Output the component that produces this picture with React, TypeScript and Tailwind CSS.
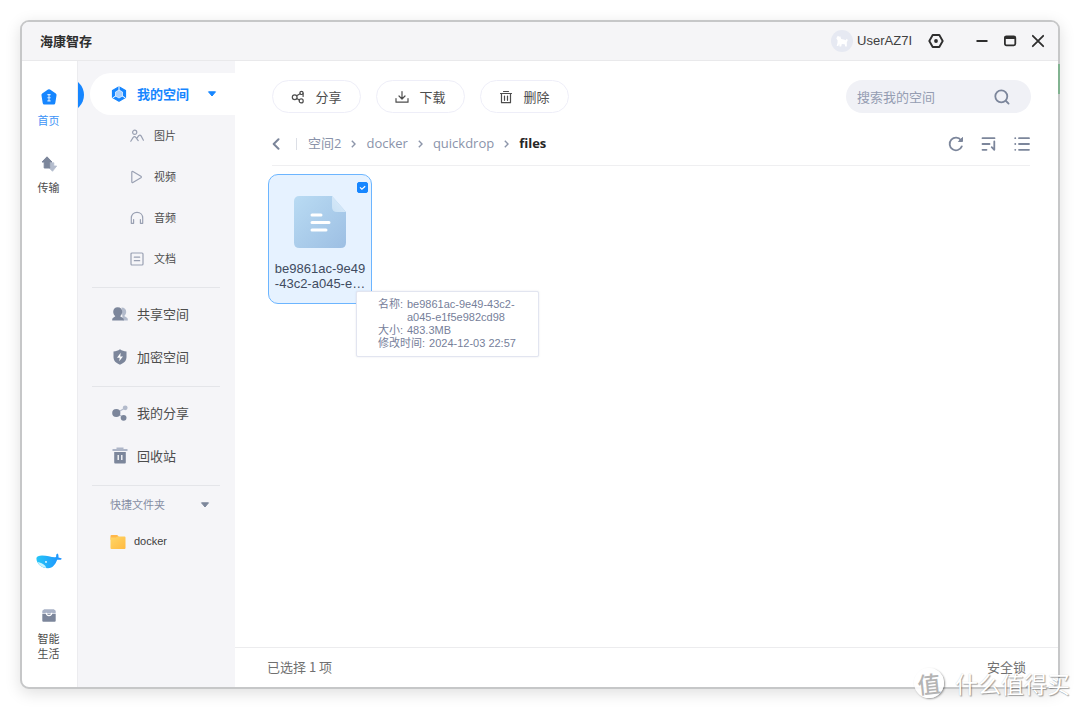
import React, { useState } from "react";

const ARIAL = "font-['Liberation_Sans','Noto_Sans_CJK_SC',sans-serif]";

function HomeIcon() {
  return (
    <svg width="16" height="16" viewBox="0 0 16 16" aria-hidden="true">
      <path d="M7 .6q1-.6 2 0l5.800 4q.9.7.7 1.800l-1.200 7.600q-.2 1.500-1.600 1.500h-9.400q-1.400 0-1.600-1.500L.5 6.400Q.3 5.300 1.200 4.600z" fill="#1686ff" />
      <path d="M8 5.500v6.500M6.400 5.600h3.200M6.400 8.700h3.200M6.400 11.900h3.200" stroke="#d6e9ff" strokeWidth="1.100" />
    </svg>
  );
}

function TransferIcon() {
  return (
    <svg width="16" height="16" viewBox="0 0 16 16" aria-hidden="true">
      <path d="M9.600 6.800h3.200v3.200h2.900l-4.200 5.300L7.800 11.600h1.800z" fill="#b4bccd" stroke="#b4bccd" strokeWidth=".8" strokeLinejoin="round" />
      <path d="M6 .8 11 6H8.800v6H3.200V6H1z" fill="#7c869b" stroke="#7c869b" strokeWidth="1" strokeLinejoin="round" />
    </svg>
  );
}

function WhaleIcon() {
  return (
    <svg width="26" height="16" viewBox="0 0 26 16" aria-hidden="true">
      <defs>
        <linearGradient id="whale" x1="0" x2="1">
          <stop offset="0" stopColor="#25c6f7" />
          <stop offset="1" stopColor="#1e90ff" />
        </linearGradient>
      </defs>
      <path d="M.4 5.200C.6 3.300 3 2.500 6 2.500c5 0 9 1.700 12.800 1.700 1-.1 1.500-.5 1.400-1.300C20 2 20.300.8 21.600.4c.9.800 1 2.600.9 4 1.200.2 2.500.6 3.300 1.300-.6 1.200-2.400 1.300-4.600 1C19.500 11 17 15.200 12 15.200 5.500 15.200.4 10.500.4 5.200z" fill="url(#whale)" />
      <path d="M1.500 9c3 .7 5.500 1.400 7.400 3.500.6.700 1.200 1.700 1.300 2.400C6 14.500 2.900 12.300 1.500 9z" fill="#c9f3ff" />
      <circle cx="10" cy="8.900" r=".9" fill="#fff" />
    </svg>
  );
}

function ChestIcon() {
  return (
    <svg width="14" height="13" viewBox="0 0 14 13" aria-hidden="true">
      <path d="M2.200.3h9.600l1.900 1.500v2.700H.3V1.800z" fill="#a9b2c6" />
      <path d="M.3 5h13.400v6.700q0 1-1 1H1.300q-1 0-1-1z" fill="#7c869b" />
      <path d="M4.200 3.800c.2 3.700 5.400 3.700 5.600 0" fill="none" stroke="#fff" strokeWidth="1.200" />
    </svg>
  );
}

function SpaceIcon() {
  return (
    <svg width="16" height="16" viewBox="0 0 16 16" aria-hidden="true">
      <path d="M8 .8 14.500 4.400v7.200L8 15.200 1.500 11.600V4.400z" fill="#1686ff" stroke="#1686ff" strokeWidth="1.200" strokeLinejoin="round" />
      <path d="M8 0v5M1.500 12l4-2.500M14.500 12l-4-2.500" stroke="#fff" strokeWidth="1" />
      <path d="M8 4 11.500 6v4L8 12 4.500 10V6z" fill="#a8d0ff" stroke="#e4f1ff" strokeWidth=".8" />
    </svg>
  );
}

const line = { fill: "none", stroke: "#9aa1b3", strokeWidth: 1.2, strokeLinecap: "round", strokeLinejoin: "round" } as const;

function PictureIcon() {
  return (
    <svg width="14" height="14" viewBox="0 0 14 14" aria-hidden="true" {...line}>
      <circle cx="4.700" cy="3.300" r="2.100" />
      <path d="M.8 12.300 3.200 8.400q1.300-1.400 2.600 0l2.400 3.200M6.800 9.400l1.900-2.700q1.300-1.200 2.400.2l2.300 4.300" />
    </svg>
  );
}

function VideoIcon() {
  return (
    <svg width="14" height="14" viewBox="0 0 14 14" aria-hidden="true" {...line}>
      <path d="M1.800 2.200q0-1.200 1.100-.7l8 4.700q.9.800 0 1.600l-8 4.700q-1.100.5-1.100-.7z" />
    </svg>
  );
}

function AudioIcon() {
  return (
    <svg width="14" height="14" viewBox="0 0 14 14" aria-hidden="true" {...line}>
      <path d="M1.300 12.300V7C1.300 3.500 3.800 1.300 7 1.300S12.700 3.500 12.700 7v5.300M3.600 8.500v3.800M10.400 8.500v3.800M1.300 12.300h2.300M10.400 12.300h2.300" />
    </svg>
  );
}

function DocumentIcon() {
  return (
    <svg width="14" height="14" viewBox="0 0 14 14" aria-hidden="true" {...line}>
      <rect x="1" y="1" width="12" height="12" rx="1" />
      <path d="M4.300 5.200h5.400M4.300 8.700h5.400" />
    </svg>
  );
}

function PeopleIcon() {
  return (
    <svg width="16" height="14" viewBox="0 0 16 14" aria-hidden="true">
      <path d="M9.500.5c3 0 4.700 2 4.700 4.200 0 1.700-.7 3.200-1.800 4.100.1 1.200 3.400 1.300 3.400 3.600v1h-5z" fill="#b2bacb" />
      <path d="M5.700.3c2.900 0 4.500 2 4.500 4.400 0 1.900-.8 3.300-1.900 4.200 0 1.300 3.500 1.200 3.500 3.700v1H.2v-1c0-2.500 3-2.400 3-3.700C2 8 1.200 6.600 1.200 4.700 1.200 2.300 2.900.3 5.700.3z" fill="#7c869b" />
    </svg>
  );
}

function ShieldIcon() {
  return (
    <svg width="14" height="16" viewBox="0 0 14 16" aria-hidden="true">
      <path d="M7 .3c2 1.400 4 2.100 6.500 2.300V8c0 3.700-2.400 6.100-6.500 7.700C2.900 14.100.5 11.700.5 8V2.600C3 2.400 5 1.700 7 .3z" fill="#7c869b" />
      <path d="M7.700 3.800 4 8.700h2.700l-.5 3.600 3.800-4.900H7.300z" fill="#fff" />
    </svg>
  );
}

function ShareSolidIcon() {
  return (
    <svg width="16" height="16" viewBox="0 0 16 16" aria-hidden="true">
      <path d="M4.500 8 13 3M4.500 8l7 4.500" stroke="#b2bacb" strokeWidth="1.200" />
      <circle cx="13.200" cy="2.800" r="2.400" fill="#b2bacb" />
      <circle cx="4.300" cy="8" r="4.100" fill="#7c869b" />
      <circle cx="11.600" cy="12.800" r="2.900" fill="#7c869b" />
    </svg>
  );
}

function TrashSolidIcon() {
  return (
    <svg width="16" height="17" viewBox="0 0 16 17" aria-hidden="true">
      <path d="M4.500.5h7v1.600h4v2H.5v-2h4z" fill="#adb5c7" />
      <path d="M2.200 5h11.600v10.500q0 1-1 1H3.200q-1 0-1-1z" fill="#7c869b" />
      <path d="M6.200 8v5M9.800 8v5" stroke="#fff" strokeWidth="1.300" />
    </svg>
  );
}

function FolderIcon() {
  return (
    <svg width="16" height="16" viewBox="0 0 16 16" aria-hidden="true">
      <defs>
        <linearGradient id="folder" x1="0" y1="0" x2="1" y2="1">
          <stop offset="0" stopColor="#ffd666" />
          <stop offset="1" stopColor="#ffba42" />
        </linearGradient>
      </defs>
      <path d="M1.500 1h5.800l1.400 1.700v3H.5V2q0-1 1-1z" fill="#ffb74a" />
      <path d="M.5 3.600h5.300L7.500 2.500h7q1 0 1 1V14q0 1-1 1h-13q-1 0-1-1z" fill="url(#folder)" />
    </svg>
  );
}

function Caret({ color }: { color: string }) {
  return (
    <svg width="10" height="6" viewBox="0 0 10 6" aria-hidden="true">
      <path d="M1.500.8h7L5 5z" fill={color} stroke={color} strokeLinejoin="round" />
    </svg>
  );
}

const dark = { fill: "none", stroke: "#4d4d4d", strokeWidth: 1.2, strokeLinecap: "round", strokeLinejoin: "round" } as const;

function ShareIcon() {
  return (
    <svg width="14" height="14" viewBox="0 0 14 14" aria-hidden="true" {...dark}>
      <circle cx="3.700" cy="7.200" r="2.400" />
      <circle cx="10.500" cy="2.900" r="1.600" />
      <circle cx="10.200" cy="10.900" r="2" />
      <path d="M5.600 5.800 9.100 3.800M5.800 8.400 8.300 10M12.100 3.200v3.200" />
    </svg>
  );
}

function DownloadIcon() {
  return (
    <svg width="14" height="14" viewBox="0 0 14 14" aria-hidden="true" {...dark}>
      <path d="M7 1.500v7.300M4 6l3 3 3-3M1 8.500v3.700h12V8.500" />
    </svg>
  );
}

function DeleteIcon() {
  return (
    <svg width="14" height="14" viewBox="0 0 14 14" aria-hidden="true" {...dark}>
      <path d="M4.500 1.500h5M1.500 3.500h11M2.500 3.500v9.200h9V3.500M5.500 6v4.300M8.500 6v4.300" />
    </svg>
  );
}

const grey = { fill: "none", stroke: "#7c869b", strokeWidth: 1.8, strokeLinecap: "round", strokeLinejoin: "round" } as const;

function RefreshIcon() {
  return (
    <svg width="16" height="16" viewBox="0 0 16 16" aria-hidden="true" {...grey}>
      <path d="M13.800 10.400A6.300 6.300 0 1 1 13 4.200" />
      <path d="M14.500 1.800v3.700h-3.700z" fill="#7c869b" strokeWidth="1" />
    </svg>
  );
}

function SortIcon() {
  return (
    <svg width="16" height="16" viewBox="0 0 16 16" aria-hidden="true" {...grey}>
      <path d="M1.500 2.200h12M1.500 8h7M1.500 13.800h4M13.300 5.500v8.300l-2.600-2.600" />
    </svg>
  );
}

function ListIcon() {
  return (
    <svg width="16" height="16" viewBox="0 0 16 16" aria-hidden="true" {...grey}>
      <path d="M5 2.200h10M5 8h10M5 13.800h10M1.200 2.200h.1M1.200 8h.1M1.200 13.800h.1" />
    </svg>
  );
}

function SearchIcon() {
  return (
    <svg width="16" height="16" viewBox="0 0 16 16" aria-hidden="true" {...grey}>
      <circle cx="7.300" cy="7.300" r="6" />
      <path d="m12 12 2.600 2.600" />
    </svg>
  );
}

function BackIcon() {
  return (
    <svg width="8" height="12" viewBox="0 0 8 12" aria-hidden="true" fill="none" stroke="#7c869b" strokeWidth="2" strokeLinecap="round" strokeLinejoin="round">
      <path d="M6.500 1.200 1.700 6l4.800 4.800" />
    </svg>
  );
}

function Chevron() {
  return (
    <svg width="7" height="8" viewBox="0 0 7 8" aria-hidden="true" fill="none" stroke="#8d96aa" strokeWidth="1.400">
      <path d="M1.800.8 5 4 1.800 7.200" />
    </svg>
  );
}

function Avatar() {
  return (
    <span className="flex size-[22px] items-center justify-center rounded-full bg-[#e6e9f2]">
      <svg width="14" height="14" viewBox="0 0 14 14" aria-hidden="true">
        <path d="M1.300 4.200 2.800 1.800l1.500 1 1-.6.900 2.800c1.700.2 3.300.4 4.400 1.300l1.200-1.500 1 1.300-1 2.200v4.200h-1.600l-.5-2.200-2.900-.2-.6 2.400H4.500l-.3-2.800-.9 2.400H1.700l.8-3.300L2.600 6.600z" fill="#fff" />
      </svg>
    </span>
  );
}

function FileIcon() {
  return (
    <svg width="54" height="54" viewBox="0 0 54 54" aria-hidden="true">
      <defs>
        <linearGradient id="file" x1="0" y1="0" x2="1" y2="1">
          <stop offset="0" stopColor="#b9dbf3" />
          <stop offset="1" stopColor="#9dbfe3" />
        </linearGradient>
        <linearGradient id="fold" x1="0" y1="1" x2="1" y2="0">
          <stop offset="0" stopColor="#c9e1f4" />
          <stop offset="1" stopColor="#dcecfb" />
        </linearGradient>
      </defs>
      <path d="M6.500 1H39l14 16v30.500q0 5.500-5.500 5.500h-41Q1 53 1 47.500v-41Q1 1 6.500 1z" fill="url(#file)" />
      <path d="M39 1v11q0 5 5 5h9z" fill="url(#fold)" />
      <path d="M19 20h9M19 27.500h17M19 35h14" stroke="#fff" strokeWidth="3" strokeLinecap="round" />
    </svg>
  );
}

const subItems = [
  { label: "图片", Icon: PictureIcon },
  { label: "视频", Icon: VideoIcon },
  { label: "音频", Icon: AudioIcon },
  { label: "文档", Icon: DocumentIcon },
];

function NavItem({ label, Icon }: { label: string; Icon: () => React.ReactElement }) {
  return (
    <button type="button" className="flex h-[43px] w-full items-center gap-[9px] pl-[34px] text-[13px] text-[#4d4d4d]">
      <span className="flex w-4 justify-center"><Icon /></span>
      {label}
    </button>
  );
}

function Divider() {
  return <hr className="mt-2 mr-[15px] mb-1 ml-[14px] border-t border-[#e4e5e9]" />;
}

function ToolButton({ label, Icon }: { label: string; Icon: () => React.ReactElement }) {
  return (
    <button type="button" className="flex h-[33px] w-[89px] items-center justify-center gap-[10px] rounded-full border border-[#eeeef8] bg-white text-[13px] text-[#4d4d4d]">
      <Icon />
      {label}
    </button>
  );
}

function TitleBar() {
  return (
    <header className="flex h-[39px] shrink-0 items-center border-b border-[#e9e9eb] bg-[#f5f5f7] pr-[13px] pl-[18px]">
      <h1 className="flex-1 text-[13px] font-bold text-[#2e2e2e]">海康智存</h1>
      <Avatar />
      <span className={`ml-1 text-[13px] text-[#404040] ${ARIAL}`}>UserAZ7I</span>
      <button type="button" aria-label="设置" className="ml-4">
        <svg width="16" height="16" viewBox="0 0 16 16" aria-hidden="true">
          <path d="M4.700 2h6.600l3.400 6-3.400 6H4.700L1.300 8z" fill="none" stroke="#2e2e2e" strokeWidth="1.900" strokeLinejoin="round" />
          <circle cx="8" cy="8" r="1.900" fill="#2e2e2e" />
        </svg>
      </button>
      <div className="ml-[31px] flex gap-[14px]">
        <button type="button" aria-label="最小化">
          <svg width="14" height="14" viewBox="0 0 14 14" aria-hidden="true"><path d="M1.500 7h11" stroke="#2e2e2e" strokeWidth="1.800" /></svg>
        </button>
        <button type="button" aria-label="最大化">
          <svg width="14" height="14" viewBox="0 0 14 14" aria-hidden="true">
            <rect x="1.900" y="2.300" width="10.400" height="9" rx="1.500" fill="none" stroke="#2e2e2e" strokeWidth="1.800" />
            <path d="M2 3.700h10" stroke="#2e2e2e" strokeWidth="2.400" />
          </svg>
        </button>
        <button type="button" aria-label="关闭">
          <svg width="14" height="14" viewBox="0 0 14 14" aria-hidden="true"><path d="m1.800 1.800 10.400 10.400M12.200 1.800 1.800 12.200" stroke="#2e2e2e" strokeWidth="1.800" strokeLinecap="round" /></svg>
        </button>
      </div>
    </header>
  );
}

function Rail() {
  return (
    <nav aria-label="主导航" className="flex w-14 shrink-0 flex-col items-center border-r border-[#ececef] pt-7 pr-[2px] pb-[26px] text-[11px] leading-[15px] text-[#4d4d4d]">
      <button type="button" className="flex flex-col items-center gap-2 text-[#3e94f7]">
        <HomeIcon />
        首页
      </button>
      <button type="button" className="mt-7 flex flex-col items-center gap-2">
        <TransferIcon />
        传输
      </button>
      <button type="button" aria-label="小鲸助手" className="mt-auto">
        <WhaleIcon />
      </button>
      <button type="button" className="mt-10 flex w-6 flex-col items-center gap-[9px]">
        <ChestIcon />
        <span>智能<br />生活</span>
      </button>
    </nav>
  );
}

function Sidebar() {
  return (
    <aside className="relative w-[157px] shrink-0 overflow-hidden bg-[#f5f5f8] pt-3">
      <span className="absolute top-[17px] -left-7 size-[34px] rounded-full bg-[#1686ff]" />
      <button type="button" className="ml-3 flex h-[42px] w-[145px] items-center rounded-l-full bg-white pl-[21px] text-[13px] font-bold text-[#1686ff]">
        <SpaceIcon />
        <span className="mr-[18px] ml-[10px]">我的空间</span>
        <Caret color="#1686ff" />
      </button>
      <ul>
        {subItems.map(({ label, Icon }) => (
          <li key={label}>
            <button type="button" className="flex h-[41px] w-full items-center gap-[10px] pl-[52px] text-[11px] text-[#4d4d4d]">
              <Icon />
              {label}
            </button>
          </li>
        ))}
      </ul>
      <Divider />
      <NavItem label="共享空间" Icon={PeopleIcon} />
      <NavItem label="加密空间" Icon={ShieldIcon} />
      <Divider />
      <NavItem label="我的分享" Icon={ShareSolidIcon} />
      <NavItem label="回收站" Icon={TrashSolidIcon} />
      <hr className="mt-2 mr-[15px] ml-[14px] border-t border-[#e4e5e9]" />
      <button type="button" className="flex h-[37px] w-full items-center justify-between pr-[25px] pl-8 text-[11px] text-[#858da3]">
        快捷文件夹
        <Caret color="#7c869b" />
      </button>
      <button type="button" className={`flex h-[37px] w-full items-center gap-2 pl-8 text-[11px] text-[#404040] ${ARIAL}`}>
        <FolderIcon />
        docker
      </button>
    </aside>
  );
}

function FileCard() {
  const [checked, setChecked] = useState(true);
  return (
    <div className="relative flex h-[130px] w-[104px] flex-col items-center rounded-[10px] border border-[#6cb5ff] bg-[#e6f2ff] pt-5">
      <label className="absolute top-[7px] right-[3px] flex size-[11px]">
        <input
          type="checkbox"
          aria-label="be9861ac-9e49-43c2-a045-e1f5e982cd98"
          checked={checked}
          onChange={(e) => setChecked(e.target.checked)}
          className="peer size-[11px] appearance-none rounded-[2px] border border-[#1686ff] bg-white checked:bg-[#1686ff]"
        />
        <svg className="pointer-events-none absolute inset-0 hidden peer-checked:block" width="11" height="11" viewBox="0 0 11 11" aria-hidden="true">
          <path d="m3 5.300 1.900 1.900L8.200 4.200" fill="none" stroke="#fff" strokeWidth="1.200" />
        </svg>
      </label>
      <FileIcon />
      <p className={`mt-3 text-right text-[13px] leading-[15px] text-[#404b60] ${ARIAL}`}>
        be9861ac-9e49
        <br />
        -43c2-a045-e…
      </p>
      <dl role="tooltip" className={`absolute top-[116px] left-[87px] z-10 w-[183px] rounded-[2px] border border-[#e2e5f0] bg-white py-[6px] pl-[21px] text-[11px] leading-[13px] text-[#76809a] shadow-[0_0_2px_rgba(120,130,160,0.2)] ${ARIAL}`}>
        <div className="flex">
          <dt className="w-[29px] shrink-0">名称:</dt>
          <dd>be9861ac-9e49-43c2-<br />a045-e1f5e982cd98</dd>
        </div>
        <div className="flex">
          <dt className="w-[29px] shrink-0">大小:</dt>
          <dd>483.3MB</dd>
        </div>
        <div className="flex gap-1">
          <dt>修改时间:</dt>
          <dd>2024-12-03 22:57</dd>
        </div>
      </dl>
    </div>
  );
}

function Main() {
  return (
    <main className="flex min-w-0 flex-1 flex-col bg-white">
      <div className="flex flex-1 flex-col pt-[19px] pr-[27px] pl-[37px]">
        <div className="flex items-center gap-[15px]">
          <ToolButton label="分享" Icon={ShareIcon} />
          <ToolButton label="下载" Icon={DownloadIcon} />
          <ToolButton label="删除" Icon={DeleteIcon} />
          <form role="search" onSubmit={(e) => e.preventDefault()} className="ml-auto flex h-[33px] w-[185px] items-center rounded-full bg-[#f0f1f6] pr-[21px] pl-[11px]">
            <input type="text" aria-label="搜索我的空间" placeholder="搜索我的空间" className="min-w-0 flex-1 bg-transparent text-[13px] text-[#404040] outline-none placeholder:text-[#959db2]" />
            <button type="submit" aria-label="搜索"><SearchIcon /></button>
          </form>
        </div>
        <div className="mt-[9px] mr-px flex h-11 items-center border-b border-[#efeff1]">
          <button type="button" aria-label="返回"><BackIcon /></button>
          <nav aria-label="路径" className="ml-4 flex flex-1 items-center gap-[9px] font-['Open_Sans','Noto_Sans_CJK_SC',sans-serif] text-[13px] text-[#8a93aa]">
            <span className="mr-[2px] h-3 w-px bg-[#dcdfe6]" />
            <a href="#space">空间2</a>
            <Chevron />
            <a href="#docker">docker</a>
            <Chevron />
            <a href="#quickdrop">quickdrop</a>
            <Chevron />
            <span className="font-bold text-[#262626]">files</span>
          </nav>
          <div className="flex gap-[17px]">
            <button type="button" aria-label="刷新"><RefreshIcon /></button>
            <button type="button" aria-label="排序"><SortIcon /></button>
            <button type="button" aria-label="列表视图"><ListIcon /></button>
          </div>
        </div>
        <div className="-ml-1 pt-2">
          <FileCard />
        </div>
      </div>
      <footer className="flex h-10 items-center justify-between border-t border-[#ececee] px-8 pb-px text-[13px] text-[#707070]">
        <span>已选择 1 项</span>
        <button type="button">安全锁</button>
      </footer>
    </main>
  );
}

function Watermark() {
  return (
    <div className="pointer-events-none absolute right-[10px] bottom-[11px] flex items-center gap-[11px] text-white">
      <span className="flex size-[30px] -rotate-6 items-center justify-center rounded-full bg-white/90 text-[23px] leading-none font-medium text-[#b4b4b4] shadow-[1px_1px_2px_rgba(0,0,0,0.4)]">值</span>
      <span className="text-[23px] leading-[30px] [text-shadow:1px_1px_1px_rgba(0,0,0,0.35),0_0_1px_rgba(0,0,0,0.2)]">什么值得买</span>
    </div>
  );
}

export default function App() {
  return (
    <div className="relative flex min-h-screen bg-white p-5 font-['Noto_Sans_CJK_SC',sans-serif]">
      <div className="relative flex flex-1 flex-col rounded-[9px] border-2 border-[#c6c7c8] bg-white shadow-[0_4px_16px_rgba(0,0,0,0.13)]">
        <span className="absolute top-[42px] -right-[2px] h-[30px] w-[2px] bg-[#82b391]" />
        <div className="flex flex-1 flex-col overflow-hidden rounded-[7px]">
          <TitleBar />
          <div className="flex flex-1">
            <Rail />
            <Sidebar />
            <Main />
          </div>
        </div>
      </div>
      <Watermark />
    </div>
  );
}
